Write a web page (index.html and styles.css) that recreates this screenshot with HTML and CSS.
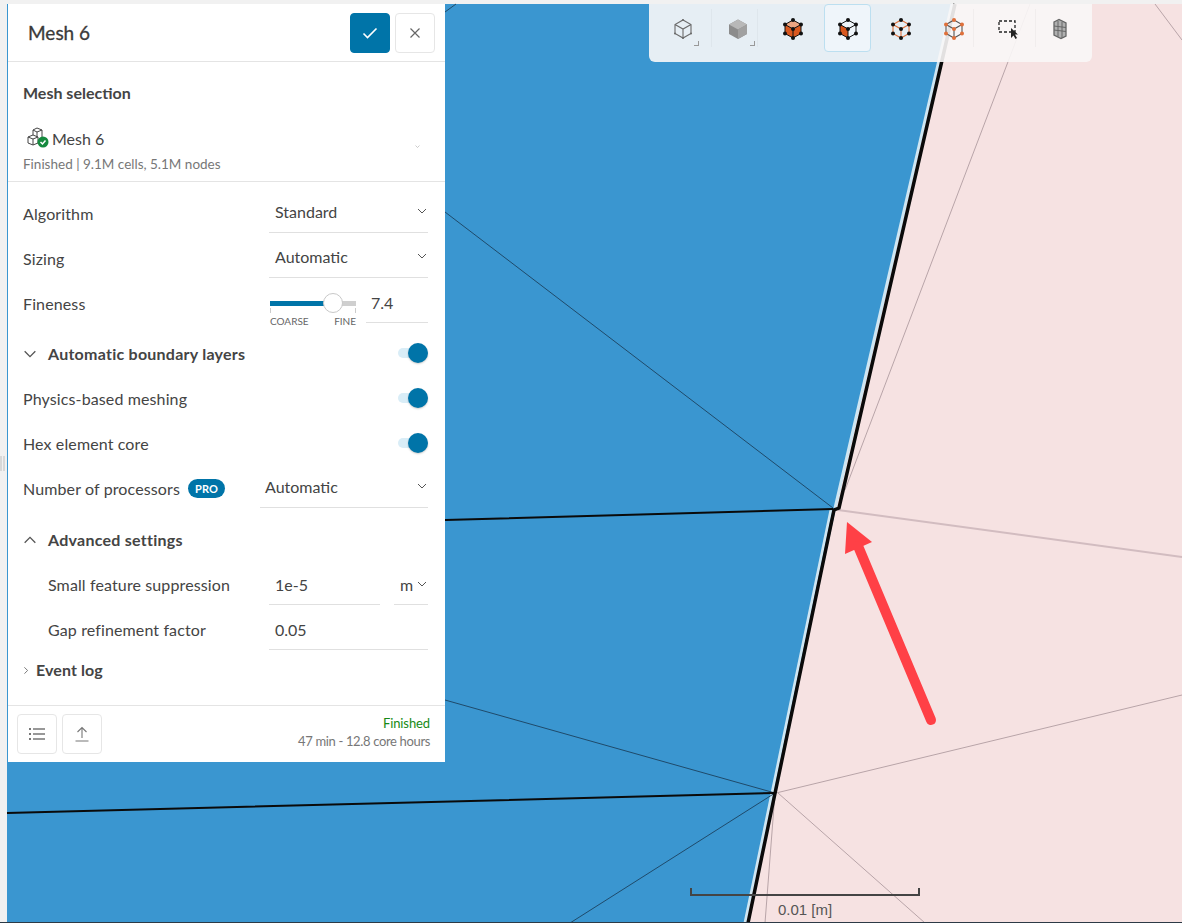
FILE: index.html
```html
<!DOCTYPE html>
<html lang="en">
<head>
<meta charset="utf-8">
<title>Mesh 6</title>
<link rel="stylesheet" href="styles.css">
</head>
<body>
<svg width="0" height="0" class="defs">
  <defs>
    <symbol id="chev" viewBox="0 0 10 6"><path d="M1 1l4 4 4-4" fill="none" stroke="currentColor" stroke-width="1"/></symbol>
    <g id="edges"><path d="M12 3l8 4.500v9L12 21l-8-4.500v-9zM4 7.500l8 4.500 8-4.500M12 12v9" fill="none"/></g>
    <g id="nodes"><circle cx="12" cy="3" r="2"/><circle cx="20" cy="7.500" r="2"/><circle cx="20" cy="16.500" r="2"/><circle cx="12" cy="21" r="2"/><circle cx="4" cy="16.500" r="2"/><circle cx="4" cy="7.500" r="2"/><circle cx="12" cy="12" r="2"/></g>
  </defs>
</svg>
<main class="app">
  <svg class="scene" width="1182" height="923" viewBox="0 0 1182 923">
    <rect width="1182" height="923" fill="#f1f1f1"/>
    <rect x="7" y="4" width="1175" height="919" fill="#f6e2e2"/>
    <path d="M7 4H953L836 508 745 923H7z" fill="#3a96d0"/>
    <path d="M952 4 835 508 M831 510 745 923" stroke="#cfe6f2" stroke-width="3" fill="none"/>
    <g fill="none" stroke="#1f4a6a" stroke-width="1">
      <path d="M445 212 833 508M445 700 775 793M570 923 775 793M445 12 456 4"/>
    </g>
    <g fill="none" stroke="#b8a4a8" stroke-width="1">
      <path d="M1030 4 845 490M776 793 1182 695M778 793 925 923M775 793 765 923M1155 4 1182 40"/>
      <path d="M838 510 1182 557" stroke="#d2bcc0" stroke-width="2"/>
    </g>
    <g fill="none" stroke="#0a0a0a">
      <path d="M445 520 833 509M7 813 775 793" stroke-width="2"/>
      <path d="M955 4 839 508 834 510 748 923" stroke-width="3.500"/>
    </g>
    <path d="M847 522 845 554 872 542z" fill="#ff4046"/>
    <path d="M858 546 931 720" stroke="#ff4046" stroke-width="10" stroke-linecap="round"/>
    <path d="M691 888v7H919v-7" fill="none" stroke="#444" stroke-width="2"/>
    <text x="778" y="915" class="scale-text">0.01 [m]</text>
    <rect x="0" y="922" width="1182" height="1" fill="#2c3a46"/>
    <path d="M1 456v15M4 456v15" stroke="#d8d8d8" stroke-width="2"/>
  </svg>

  <nav class="toolbar">
    <button class="tool t1 sep">
      <svg width="24" height="24" viewBox="0 0 24 24"><use href="#edges" stroke="#6a6a6a" stroke-width="1.100"/><circle cx="12" cy="3" r="1" fill="#6a6a6a"/><circle cx="4" cy="16.500" r="1" fill="#6a6a6a"/><circle cx="20" cy="16.500" r="1" fill="#6a6a6a"/><circle cx="12" cy="21" r="1" fill="#6a6a6a"/></svg>
      <i class="corner"></i>
    </button>
    <button class="tool t2 sep">
      <svg width="24" height="24" viewBox="0 0 24 24"><path d="M12 2.500l9 5v9.500l-9 5-9-5V7.500z" fill="#8c8c8c"/><path d="M12 2.500l9 5-9 5-9-5z" fill="#b8b8b8"/><path d="M12 12.500l9-5v9.500l-9 5z" fill="#a0a0a0"/></svg>
      <i class="corner"></i>
    </button>
    <button class="tool t3">
      <svg width="24" height="24" viewBox="0 0 24 24"><path d="M12 3l8 4.500v9L12 21l-8-4.500v-9z" fill="#d9581f"/><path d="M12 3l8 4.500L12 12 4 7.500z" fill="#eca582"/><use href="#edges" stroke="#111" stroke-width="1"/><use href="#nodes" fill="#111"/></svg>
    </button>
    <button class="tool t4 active">
      <svg width="24" height="24" viewBox="0 0 24 24"><path d="M4 7.500l8 4.500v9l-8-4.500z" fill="#d9581f"/><use href="#edges" stroke="#111" stroke-width="1"/><use href="#nodes" fill="#111"/></svg>
    </button>
    <button class="tool t5">
      <svg width="24" height="24" viewBox="0 0 24 24"><use href="#edges" stroke="#e0703a" stroke-width="1.100"/><use href="#nodes" fill="#111"/></svg>
    </button>
    <button class="tool t6 sep">
      <svg width="24" height="24" viewBox="0 0 24 24"><use href="#edges" stroke="#555" stroke-width="1.100"/><use href="#nodes" fill="#e0703a"/></svg>
    </button>
    <button class="tool t7 sep">
      <svg width="24" height="24" viewBox="0 0 24 24"><rect x="3" y="4" width="16" height="11" fill="none" stroke="#222" stroke-width="1.300" stroke-dasharray="3 2"/><path d="M15 11l0 10 2.500-2.500 2 3.500 1.500-1-2-3.500h3z" fill="#222"/></svg>
    </button>
    <button class="tool t8">
      <svg width="24" height="24" viewBox="0 0 24 24"><path d="M6 5l5-2.500L18 6v13l-5 2.500L6 18z" fill="#b0b0b0" stroke="#666" stroke-width="1.300"/><path d="M6 9l12 1.500M6 13l12 1.500M10 4v15.500M14 5v16" fill="none" stroke="#666" stroke-width="1"/></svg>
    </button>
  </nav>

  <aside class="panel">
    <header class="panel-head">
      <h1>Mesh 6</h1>
      <button class="btn btn-primary"><svg width="16" height="12" viewBox="0 0 16 12"><path d="M1.500 6.500l4 4 9-9" fill="none" stroke="#fff" stroke-width="1.600"/></svg></button>
      <button class="btn"><svg width="12" height="12" viewBox="0 0 12 12"><path d="M1.500 1.500l9 9M10.500 1.500l-9 9" fill="none" stroke="#666" stroke-width="1.200"/></svg></button>
    </header>

    <section class="mesh-select">
      <h2>Mesh selection</h2>
      <div class="mesh-line">
        <span class="mesh-icon">
          <svg width="24" height="24" viewBox="0 0 24 24"><path d="M2 11l5-2 5 2v6l-5 2-5-2zM2 11l5 2 5-2M7 13v6M7 9V4l4-2 5 2v9l-4 2M7 4l4 2 5-2M11 6v5" fill="none" stroke="#444" stroke-width="1"/><circle cx="17" cy="16" r="5.500" fill="#158a3e"/><path d="M14.500 16l2 2 3-3.500" fill="none" stroke="#fff" stroke-width="1.500"/></svg>
        </span>
        <span class="mesh-name">Mesh 6</span>
        <svg class="mini-chev" width="5" height="3"><use href="#chev"/></svg>
      </div>
      <p class="mesh-sub">Finished | 9.1M cells, 5.1M nodes</p>
    </section>

    <form class="form">
      <div class="row">
        <span class="label">Algorithm</span>
        <div class="field select"><span>Standard</span><svg class="chev" width="10" height="6"><use href="#chev"/></svg></div>
      </div>
      <div class="row">
        <span class="label">Sizing</span>
        <div class="field select"><span>Automatic</span><svg class="chev" width="10" height="6"><use href="#chev"/></svg></div>
      </div>
      <div class="row">
        <span class="label">Fineness</span>
        <div class="fineness">
          <div class="slider">
            <div class="track"><div class="fill"></div><div class="thumb"></div></div>
            <div class="ticks"></div>
            <div class="slider-labels"><span>COARSE</span><span>FINE</span></div>
          </div>
          <div class="field value">7.4</div>
        </div>
      </div>
      <div class="row row-gap">
        <span class="label strong with-caret"><svg class="caret" width="14" height="8" viewBox="0 0 10 6"><use href="#chev"/></svg>Automatic boundary layers</span>
        <span class="toggle"></span>
      </div>
      <div class="row">
        <span class="label">Physics-based meshing</span>
        <span class="toggle"></span>
      </div>
      <div class="row">
        <span class="label">Hex element core</span>
        <span class="toggle"></span>
      </div>
      <div class="row">
        <span class="label">Number of processors <b class="pro">PRO</b></span>
        <div class="field select wide"><span>Automatic</span><svg class="chev" width="10" height="6"><use href="#chev"/></svg></div>
      </div>
      <div class="row row-gap2">
        <span class="label strong with-caret"><svg class="caret up" width="14" height="8" viewBox="0 0 10 6"><use href="#chev"/></svg>Advanced settings</span>
      </div>
      <div class="row">
        <span class="label sub">Small feature suppression</span>
        <div class="pair">
          <div class="field low num">1e-5</div>
          <div class="field low select unit"><span>m</span><svg class="chev" width="10" height="6"><use href="#chev"/></svg></div>
        </div>
      </div>
      <div class="row">
        <span class="label sub">Gap refinement factor</span>
        <div class="field low">0.05</div>
      </div>
      <div class="event-log">
        <svg class="caret right" width="8" height="5" viewBox="0 0 10 6"><use href="#chev"/></svg>
        <span class="label strong">Event log</span>
      </div>
    </form>

    <footer class="panel-foot">
      <button class="btn"><svg width="18" height="14" viewBox="0 0 18 14"><path d="M5 2h12M5 7h12M5 12h12" stroke="#777" stroke-width="1.400"/><path d="M1 2h2M1 7h2M1 12h2" stroke="#777" stroke-width="1.800"/></svg></button>
      <button class="btn"><svg width="14" height="16" viewBox="0 0 14 16"><path d="M7 12V1.500M2.500 6L7 1.500 11.500 6M0.500 15h13" fill="none" stroke="#777" stroke-width="1.100"/></svg></button>
      <div class="status">
        <span class="finished">Finished</span>
        <span class="cost">47 min - 12.8 core hours</span>
      </div>
    </footer>
  </aside>
</main>
</body>
</html>
```
FILE: styles.css
```css
* { box-sizing: border-box; }
html, body { margin: 0; padding: 0; height: 100%; overflow: hidden; }
body { font-family: "Lato", "Liberation Sans", sans-serif; color: #444; font-size: 16px; }
.defs { position: absolute; }
.app { position: relative; width: 1182px; height: 923px; overflow: hidden; }
.scene { position: absolute; inset: 0; display: block; }
.scale-text { font-family: "Liberation Sans", sans-serif; font-size: 15px; fill: #555; }

.toolbar {
  position: absolute; left: 649px; top: 4px; width: 443px; height: 58px;
  display: flex; align-items: flex-start; padding-left: 2px;
  background: rgba(250, 247, 247, 0.9);
  border-radius: 0 0 6px 6px;
}
.tool {
  position: relative; height: 48px; padding: 1px 0 0; border: 1px solid transparent; background: none;
  display: flex; align-items: center; justify-content: center; flex: none;
}
.t1 { width: 64px; }
.t2 { width: 46px; }
.t3 { width: 63px; }
.t4 { width: 47px; }
.t5 { width: 60px; }
.t6 { width: 46px; }
.t7 { width: 62px; }
.t8 { width: 42px; }
.tool.active { background: #eff5fa; border-color: #bcdff0; border-radius: 4px; }
.sep::after {
  content: ""; position: absolute; right: 2px; top: 4px; bottom: 4px; width: 1px; background: rgba(0, 0, 0, 0.03);
}
.corner {
  position: absolute; bottom: 5px; width: 5px; height: 5px;
  border-right: 1px solid #999; border-bottom: 1px solid #999;
}
.t1 .corner { right: 15px; }
.t2 .corner { right: 5px; }

.panel {
  position: absolute; left: 8px; top: 4px; width: 437px; height: 758px;
  display: flex; flex-direction: column; background: #fff;
}
.panel-head {
  height: 58px; flex: none; display: flex; align-items: flex-start; gap: 5px;
  padding: 9px 10px 0 20px; border-bottom: 1px solid #e4e4e4;
}
.panel-head h1 {
  margin: 0 auto 0 0; font-size: 19px; font-weight: 400; line-height: 39px; color: #3a3a3a;
  -webkit-text-stroke: 0.3px #3a3a3a;
}
.btn {
  width: 40px; height: 40px; padding: 0; flex: none; background: #fff;
  border: 1px solid #e6e6e6; border-radius: 4px;
  display: flex; align-items: center; justify-content: center;
}
.btn-primary { background: #0074a8; border-color: #0074a8; }

.mesh-select { height: 120px; flex: none; padding: 21px 15px 0; border-bottom: 1px solid #e4e4e4; }
.mesh-select h2 { margin: 0; font-size: 16px; font-weight: 700; line-height: 20px; color: #444; }
.mesh-line { display: flex; align-items: center; height: 24px; margin-top: 23px; position: relative; }
.mesh-icon { width: 29px; height: 24px; padding-left: 3px; flex: none; display: block; }
.mesh-name { font-size: 16px; }
.mini-chev { position: absolute; right: 10px; top: 19px; color: #999; }
.mesh-sub { margin: 5px 0 0; font-size: 13.500px; line-height: 18px; color: #777; }

.form { flex: 1; padding: 10px 17px 0 15px; display: flex; flex-direction: column; }
.row { height: 45px; flex: none; display: flex; align-items: flex-start; justify-content: space-between; }
.row-gap { margin-top: 5px; }
.row-gap2 { margin-top: 6px; }
.label { line-height: 43px; font-size: 16px; color: #444; display: flex; align-items: center; gap: 8px; letter-spacing: 0.12px; }
.label.strong { font-weight: 700; letter-spacing: 0.25px; }
.with-caret { gap: 11px; }
.label.sub { padding-left: 25px; }
.caret { color: #555; display: block; }
.caret.up { transform: rotate(180deg); }
.caret.right { transform: rotate(-90deg); color: #555; }

.field {
  width: 159px; height: 41px; flex: none; padding: 0 6px 2px; display: flex; align-items: center;
  justify-content: space-between; border-bottom: 1px solid #e0e0e0; font-size: 16px; color: #444;
}
.field.low { height: 42px; padding-top: 1px; padding-bottom: 0; }
.field.wide { width: 168px; padding-left: 5px; }
.chev { color: #555; flex: none; }
.select { padding-right: 1px; }

.fineness { width: 159px; display: flex; justify-content: space-between; }
.slider { width: 87px; padding: 19px 0 0 1px; }
.track { position: relative; height: 5px; background: #cfcfcf; width: 86px; }
.fill { position: absolute; left: 0; top: 0; bottom: 0; width: 56px; background: #0074a8; }
.thumb {
  position: absolute; left: 53px; top: -8px; width: 20px; height: 20px; border-radius: 50%;
  background: #fff; border: 1px solid #c8c8c8;
}
.ticks { width: 86px; height: 5px; margin-top: 2px; border-left: 1px solid #ccc; border-right: 1px solid #ccc; }
.slider-labels {
  display: flex; justify-content: space-between; width: 86px; margin-top: 2px;
  font-size: 10px; line-height: 12px; color: #666;
}
.field.value { width: 62px; height: 41px; padding-left: 5px; padding-top: 2px; padding-bottom: 1px; }

.toggle { position: relative; width: 30px; height: 10px; margin-top: 16px; background: #d9edf7; border-radius: 5px; }
.toggle::after {
  content: ""; position: absolute; right: 0; top: -5px; width: 20px; height: 20px; border-radius: 50%;
  background: #0074a8; box-shadow: 0 1px 2px rgba(0, 0, 0, 0.2);
}
.pro {
  display: inline-flex; align-items: center; justify-content: center; width: 37px; height: 19px;
  border-radius: 10px; background: #0074a8; color: #fff; font-size: 11px; font-weight: 700;
}
.pair { width: 159px; display: flex; justify-content: space-between; }
.field.num { width: 111px; }
.field.unit { width: 34px; padding-left: 6px; }

.event-log { height: 34px; display: flex; align-items: center; gap: 6px; margin-left: -1px; }
.event-log .label { line-height: 34px; letter-spacing: 0.1px; }

.panel-foot {
  height: 57px; flex: none; display: flex; align-items: flex-start; gap: 5px;
  padding: 8px 15px 0 9px; border-top: 1px solid #e4e4e4;
}
.status { margin-left: auto; display: flex; flex-direction: column; align-items: flex-end; }
.finished { font-size: 13px; line-height: 18px; color: #168a16; letter-spacing: -0.1px; }
.cost { font-size: 13px; line-height: 18px; color: #777; letter-spacing: -0.35px; }
```
